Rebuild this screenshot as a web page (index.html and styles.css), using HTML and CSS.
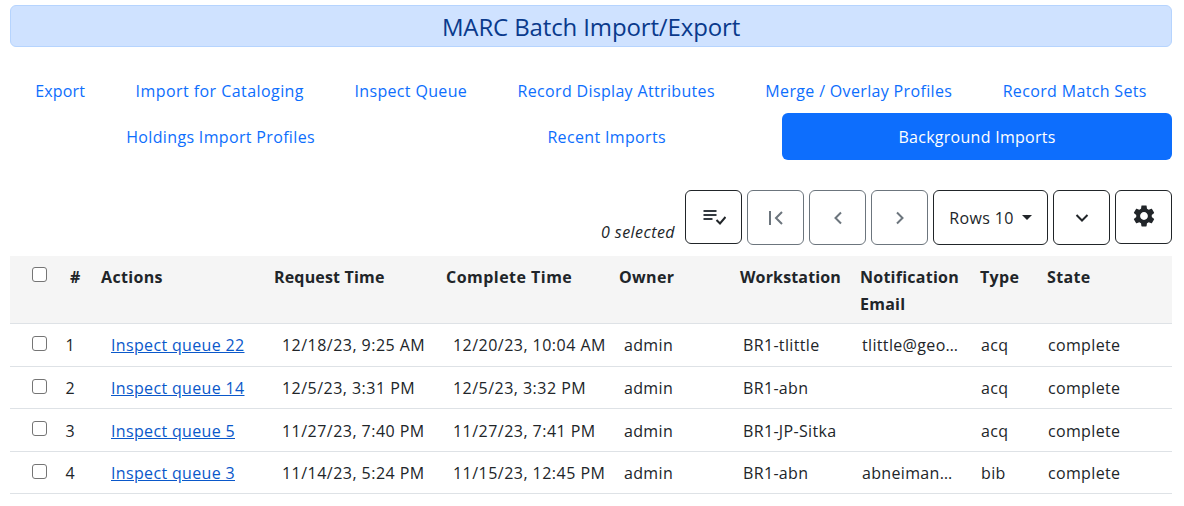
FILE: index.html
```html
<!DOCTYPE html>
<html lang="en">
<head>
<meta charset="utf-8">
<title>MARC Batch Import/Export</title>
<link rel="stylesheet" href="styles.css">
</head>
<body>
<main class="page">
  <h1 class="banner">MARC Batch Import/Export</h1>
  <nav class="tabs">
    <a class="tab narrow">Export</a>
    <a class="tab wide">Import for Cataloging</a>
    <a class="tab">Inspect Queue</a>
    <a class="tab">Record Display Attributes</a>
    <a class="tab">Merge / Overlay Profiles</a>
    <a class="tab">Record Match Sets</a>
    <a class="tab">Holdings Import Profiles</a>
    <a class="tab">Recent Imports</a>
    <a class="tab active">Background Imports</a>
  </nav>
  <div class="toolbar">
    <span class="selected">0 selected</span>
    <button class="btn short">
      <svg width="24" height="16" viewBox="0 0 24 16"><path d="M1.500 2h13M1.500 6h13M1.500 10h9" stroke="#343a40" stroke-width="2" fill="none"/><path d="M14.500 11l3.500 3.500 5.500-6.500" stroke="#212529" stroke-width="2" fill="none"/></svg>
    </button>
    <button class="btn off">
      <svg width="16" height="14" viewBox="0 0 16 14"><path d="M2 0v14" stroke="#6c757d" stroke-width="2" fill="none"/><path d="M14 1L8 7l6 6" stroke="#6c757d" stroke-width="2" fill="none"/></svg>
    </button>
    <button class="btn off">
      <svg width="10" height="14" viewBox="0 0 10 14"><path d="M8 1.500L2.500 7 8 12.500" stroke="#6c757d" stroke-width="2" fill="none"/></svg>
    </button>
    <button class="btn off">
      <svg width="10" height="14" viewBox="0 0 10 14"><path d="M2 1.500L7.500 7 2 12.500" stroke="#6c757d" stroke-width="2" fill="none"/></svg>
    </button>
    <button class="btn rows">Rows 10<span class="caret"></span></button>
    <button class="btn">
      <svg width="14" height="10" viewBox="0 0 14 10"><path d="M1.500 2l5.500 5.500L12.500 2" stroke="#212529" stroke-width="2" fill="none"/></svg>
    </button>
    <button class="btn short">
      <svg class="gear" width="26" height="26" viewBox="0 0 24 24"><path fill="#212529" d="M19.140 12.940c.04-.3.06-.61.06-.94 0-.32-.02-.64-.07-.94l2.030-1.580c.18-.14.23-.41.12-.61l-1.920-3.320c-.12-.22-.37-.29-.59-.22l-2.390.96c-.5-.38-1.030-.7-1.620-.94l-.36-2.540c-.04-.24-.24-.41-.48-.41h-3.840c-.24 0-.43.17-.47.41l-.36 2.540c-.59.24-1.130.57-1.620.94l-2.390-.96c-.22-.08-.47 0-.59.22L2.740 8.870c-.12.21-.08.47.12.61l2.030 1.580c-.05.3-.09.63-.09.94s.02.64.07.94l-2.030 1.580c-.18.14-.23.41-.12.61l1.920 3.320c.12.22.37.29.59.22l2.390-.96c.5.38 1.030.7 1.620.94l.36 2.540c.05.24.24.41.48.41h3.840c.24 0 .44-.17.47-.41l.36-2.540c.59-.24 1.130-.56 1.620-.94l2.390.96c.22.08.47 0 .59-.22l1.920-3.320c.12-.22.07-.47-.12-.61l-2.010-1.580zM12 15.600c-1.980 0-3.600-1.620-3.600-3.600s1.620-3.600 3.600-3.600 3.600 1.620 3.600 3.600-1.620 3.600-3.600 3.600z"/></svg>
    </button>
  </div>
  <div class="grid">
    <div class="row head">
      <div class="c0"><span class="check"></span></div>
      <div class="c1">#</div>
      <div class="c2">Actions</div>
      <div class="c3">Request Time</div>
      <div class="c4">Complete Time</div>
      <div class="c5">Owner</div>
      <div class="c6">Workstation</div>
      <div class="c7">Notification Email</div>
      <div class="c8">Type</div>
      <div class="c9">State</div>
    </div>
    <div class="row body">
      <div class="c0"><span class="check"></span></div>
      <div class="c1">1</div>
      <div class="c2"><a class="link">Inspect queue 22</a></div>
      <div class="c3">12/18/23, 9:25 AM</div>
      <div class="c4">12/20/23, 10:04 AM</div>
      <div class="c5">admin</div>
      <div class="c6">BR1-tlittle</div>
      <div class="c7">tlittle@georgialibraries.org</div>
      <div class="c8">acq</div>
      <div class="c9">complete</div>
    </div>
    <div class="row body">
      <div class="c0"><span class="check"></span></div>
      <div class="c1">2</div>
      <div class="c2"><a class="link">Inspect queue 14</a></div>
      <div class="c3">12/5/23, 3:31 PM</div>
      <div class="c4">12/5/23, 3:32 PM</div>
      <div class="c5">admin</div>
      <div class="c6">BR1-abn</div>
      <div class="c7"></div>
      <div class="c8">acq</div>
      <div class="c9">complete</div>
    </div>
    <div class="row body">
      <div class="c0"><span class="check"></span></div>
      <div class="c1">3</div>
      <div class="c2"><a class="link">Inspect queue 5</a></div>
      <div class="c3">11/27/23, 7:40 PM</div>
      <div class="c4">11/27/23, 7:41 PM</div>
      <div class="c5">admin</div>
      <div class="c6">BR1-JP-Sitka</div>
      <div class="c7"></div>
      <div class="c8">acq</div>
      <div class="c9">complete</div>
    </div>
    <div class="row body">
      <div class="c0"><span class="check"></span></div>
      <div class="c1">4</div>
      <div class="c2"><a class="link">Inspect queue 3</a></div>
      <div class="c3">11/14/23, 5:24 PM</div>
      <div class="c4">11/15/23, 12:45 PM</div>
      <div class="c5">admin</div>
      <div class="c6">BR1-abn</div>
      <div class="c7">abneiman@georgialibraries.org</div>
      <div class="c8">bib</div>
      <div class="c9">complete</div>
    </div>
  </div>
</main>
</body>
</html>
```
FILE: styles.css
```css
* { box-sizing: border-box; }
body {
  margin: 0;
  font-family: "Open Sans", "Noto Sans", sans-serif;
  font-size: 16px;
  line-height: 24px;
  letter-spacing: 0.340px;
  color: #212529;
  background: #fff;
}
.page { padding: 5px 12px 0 10px; }
.banner {
  margin: 0;
  height: 42px;
  background: #cfe2ff;
  border: 1px solid #b6d4fe;
  border-radius: 6px;
  color: #0a3a8c;
  font-size: 24px;
  font-weight: 400;
  line-height: 42px;
  letter-spacing: -0.130px;
  text-align: center;
}
.tabs {
  display: flex;
  flex-wrap: wrap;
  margin-top: 21px;
}
.tab {
  flex: 1 1 auto;
  padding: 11px 16px;
  height: 46px;
  text-align: center;
  color: #0d6efd;
  border-radius: 6px;
}
.tab.narrow { letter-spacing: 0.150px; }
.tab.wide { letter-spacing: 0.440px; }
.tab.active {
  background: #0d6efd;
  color: #fff;
  height: 47px;
  margin-top: -1px;
  padding-top: 12px;
  letter-spacing: 0.280px;
}
.toolbar {
  display: flex;
  justify-content: flex-end;
  align-items: flex-start;
  gap: 5px;
  margin-top: 30px;
}
.selected {
  align-self: flex-end;
  margin-right: 5px;
  margin-bottom: 1px;
  font-style: italic;
  line-height: 24px;
  letter-spacing: 0.450px;
}
.btn {
  display: flex;
  align-items: center;
  justify-content: center;
  width: 57px;
  height: 55px;
  padding: 0;
  background: #fff;
  border: 1px solid #212529;
  border-radius: 6px;
  color: #212529;
  font: inherit;
  letter-spacing: inherit;
}
.btn.short { height: 54px; }
.btn.off { border-color: #6c757d; }
.btn.rows { width: 115px; }
.gear { margin-bottom: 2px; }
.caret {
  margin-left: 8px;
  border-top: 5px solid #212529;
  border-left: 5px solid transparent;
  border-right: 5px solid transparent;
}
.grid { margin-top: 11px; }
.row {
  display: grid;
  grid-template-columns: 56px 31px 173px 172px 173px 121px 120px 120px 67px 129px;
}
.head {
  height: 68px;
  padding-top: 9px;
  background: #f5f5f5;
  border-bottom: 1px solid #dee2e6;
  font-weight: 700;
}
.body {
  height: 42.600px;
  padding-top: 9.450px;
  border-bottom: 1px solid #dee2e6;
}
.c0 { padding-left: 22px; }
.check {
  display: block;
  width: 15px;
  height: 15px;
  margin-top: 2px;
  background: #fff;
  border: 1px solid #757575;
  border-radius: 3px;
}
.body .check { margin-top: 2.500px; }
.c3, .c4 { letter-spacing: 0.470px; }
.c7 { overflow: hidden; text-overflow: ellipsis; white-space: nowrap; }
.head .c3 { letter-spacing: 0.170px; }
.head .c6 { letter-spacing: 0.150px; }
.head .c7 { white-space: normal; line-height: 27px; margin-top: -1px; letter-spacing: 0.250px; }
.head .c1 { padding-left: 4px; }
.head .c2, .head .c3, .head .c4, .head .c5, .head .c6, .head .c7, .head .c8, .head .c9 { padding-left: 4px; }
.body .c1 { margin-left: -0.500px; }
.body .c2 { padding-left: 14px; }
.body .c3 { padding-left: 12px; }
.body .c4 { padding-left: 11px; }
.body .c5 { padding-left: 9px; }
.body .c6 { padding-left: 7px; }
.body .c7 { padding-left: 6px; padding-right: 12px; }
.body .c8 { padding-left: 5px; }
.body .c9 { padding-left: 5px; }
.link { color: #0a58ca; text-decoration: underline; }
```
